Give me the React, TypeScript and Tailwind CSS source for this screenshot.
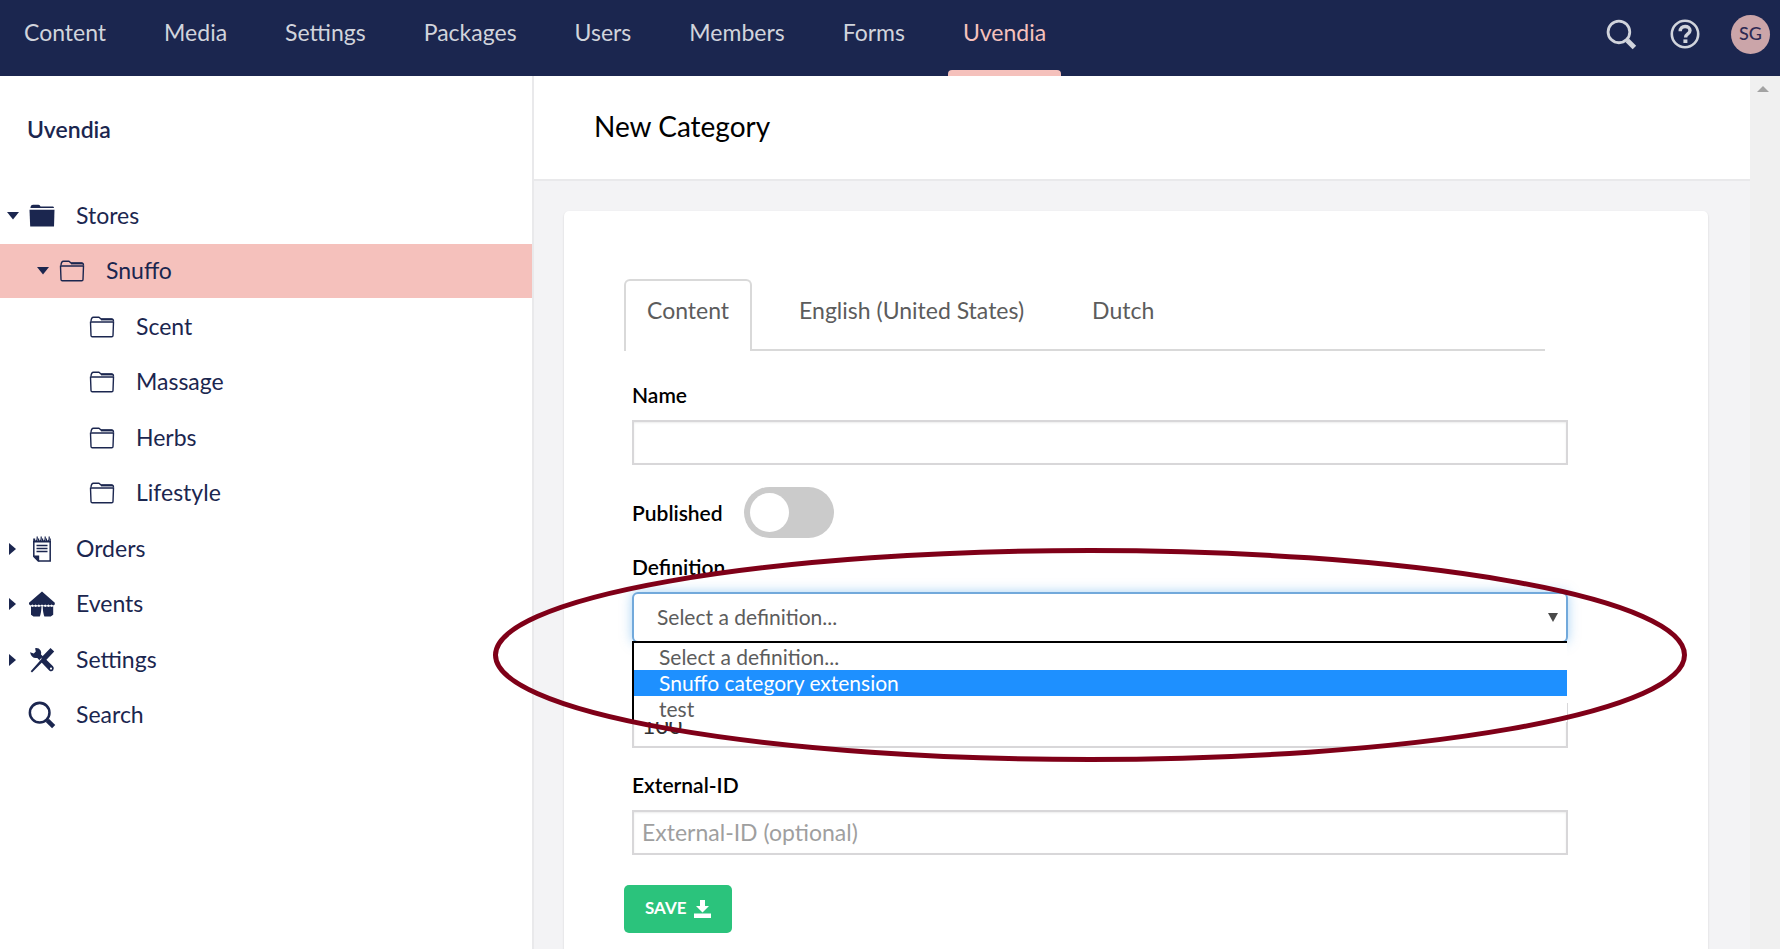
import type { ReactNode } from "react";

const sections = ["Content", "Media", "Settings", "Packages", "Users", "Members", "Forms", "Uvendia"];

function SearchIcon({ className }: { className: string }) {
  return (
    <svg viewBox="0 0 30 30" className={className} fill="none" aria-hidden="true">
      <circle cx="12.500" cy="12.500" r="10.500" stroke="currentColor" strokeWidth="2.700" />
      <path d="M19.500 19.500l1.500 1.500" stroke="currentColor" strokeWidth="3" />
      <path d="M20.700 20.700l6.800 6.800" stroke="currentColor" strokeWidth="4.800" />
    </svg>
  );
}

function HelpIcon() {
  return (
    <svg viewBox="0 0 30 30" className="size-[30px]" fill="none" stroke="currentColor" aria-hidden="true">
      <circle cx="15" cy="15" r="13.200" strokeWidth="2.600" />
      <path d="M10.200 12.200c0-3 2-4.700 4.900-4.700 2.800 0 4.900 1.500 4.900 4.100 0 3.400-4.400 3.300-4.400 6.800" strokeWidth="3.400" />
      <path d="M13.400 22.200h4" strokeWidth="3.600" />
    </svg>
  );
}

function FolderSolid() {
  return (
    <svg viewBox="0 0 26 24" className="h-6 w-[26px]" fill="currentColor" aria-hidden="true">
      <path d="M1.500 4V3Q2 .8 4 .8h5.500q1.500 0 2 1.700H24q1 0 1 1.500z" />
      <path d="M.5 5.800h25L25 22.500H1.200z" />
    </svg>
  );
}

function FolderOutline() {
  return (
    <svg viewBox="0 0 26 24" className="h-6 w-[26px]" fill="none" stroke="currentColor" strokeWidth="1.400" strokeLinejoin="round" aria-hidden="true">
      <path d="M1.500 7L2 20.500q.1 1.300 1.300 1.300h19.400q1.300 0 1.300-1.300L24.500 7z" />
      <path d="M2 6.500Q2.200 2.200 4.500 2.200H10l2 1.800h10.500q2 0 2 2.500" />
      <path d="M12 4.500h11.500" strokeWidth="1.800" />
    </svg>
  );
}

function OrdersIcon() {
  return (
    <svg viewBox="0 0 26 26" className="size-[26px]" fill="none" stroke="currentColor" aria-hidden="true">
      <path d="M4.800 5v15.500l4.500 4.500h11.900V5" strokeWidth="1.500" />
      <path d="M4.200 2.500h17.600v4H4.200z" fill="currentColor" stroke="none" />
      <path d="M7.500 1v3.500M11.500 1v3.500M15.500 1v3.500M19.300 1v3.500" stroke="#fff" strokeWidth="2.600" />
      <path d="M6.500 5q2 0 1.700-4.500M10.500 5q2 0 1.700-4.500M14.500 5q2 0 1.700-4.500M18.500 5q2 0 1.700-4.500" strokeWidth="1.200" />
      <path d="M7.500 9.500h11M7.500 12.500h11M7.500 15.500h11" strokeWidth="1.500" />
      <path d="M4.200 19.500h6V26z" fill="currentColor" stroke="none" />
    </svg>
  );
}

function EventsIcon() {
  return (
    <svg viewBox="0 0 26 26" className="size-[26px]" fill="currentColor" aria-hidden="true">
      <path d="M13 .5L25.800 11.800v1.700l-1.600 1-1.600-1-1.600 1-1.600-1-1.600 1-1.600-1-1.600 1-1.600-1-1.600 1-1.600-1-1.600 1-1.600-1-1.600 1-1.600-1-1.600 1-1.600-1-.4-1.700z" />
      <path d="M2 15.300l1.500.7 1.600-.7 1.600.7 1.600-.7 1.600.7 1.600-.7h1Q12.300 22 10.800 25.500H4.500L2 23.800z" />
      <path d="M24.200 15.300l-1.500.7-1.600-.7-1.600.7-1.600-.7-1.600.7-1.600-.7h-1Q13.900 22 15.400 25.500h6.300l2.500-1.700z" />
    </svg>
  );
}

function ToolsIcon() {
  return (
    <svg viewBox="0 0 26 26" className="size-[26px]" fill="currentColor" aria-hidden="true">
      <path d="M1 5.300l3.800 1.200 2-2-.7-3.300Q9.800.6 11.600 3.500q1 1.800.4 4L24 19.300q1.800 2 .2 4-2 1.900-4 .1L8.300 10.900Q2.600 12 1 5.300zm21 15.200a1.100 1.100 0 100 2.200 1.100 1.100 0 000-2.200z" />
      <path d="M10.800 13.700l3.300-3.300" stroke="#fff" strokeWidth="1.600" />
      <path d="M21.500 1l3.700 3.500-8.700 9.200-1.600-.2L3 25.600 1.700 24.300 12.500 12l-.2-1.600z" />
    </svg>
  );
}

function Caret({ open }: { open: boolean }) {
  return (
    <svg viewBox="0 0 12 12" className="size-3" fill="#1b264f" aria-hidden="true">
      {open ? <path d="M0 2h12L6 9.500z" /> : <path d="M2 0v12L9 6z" />}
    </svg>
  );
}

type Node = { label: string; indent: string; caret?: "open" | "closed"; icon: ReactNode; active?: boolean };

const tree: Node[] = [
  { label: "Stores", indent: "pl-[7px]", caret: "open", icon: <FolderSolid /> },
  { label: "Snuffo", indent: "pl-[37px]", caret: "open", icon: <FolderOutline />, active: true },
  { label: "Scent", indent: "pl-[67px]", icon: <FolderOutline /> },
  { label: "Massage", indent: "pl-[67px]", icon: <FolderOutline /> },
  { label: "Herbs", indent: "pl-[67px]", icon: <FolderOutline /> },
  { label: "Lifestyle", indent: "pl-[67px]", icon: <FolderOutline /> },
  { label: "Orders", indent: "pl-[7px]", caret: "closed", icon: <OrdersIcon /> },
  { label: "Events", indent: "pl-[7px]", caret: "closed", icon: <EventsIcon /> },
  { label: "Settings", indent: "pl-[7px]", caret: "closed", icon: <ToolsIcon /> },
  { label: "Search", indent: "pl-[7px]", icon: <SearchIcon className="size-[28px]" /> },
];

function Header() {
  return (
    <header className="flex h-[76px] shrink-0 items-stretch justify-between bg-[#1b264f] pr-[10px] pl-[9px]">
      <nav className="flex gap-7" aria-label="Sections">
        {sections.map((name) => {
          const active = name === "Uvendia";
          return (
            <a
              key={name}
              href="#"
              className={`relative flex px-[15px] pt-[17px] leading-[30px] ${active ? "text-[#f5c1bc]" : "text-[#d1d4dc]"}`}
            >
              {name}
              {active && <span className="absolute inset-x-0 bottom-0 h-[6px] rounded-t-[4px] bg-[#f5c1bc]" />}
            </a>
          );
        })}
      </nav>
      <div className="flex h-[68px] items-center text-[#d1d4dc]">
        <button type="button" aria-label="Search" className="mr-[33px]">
          <SearchIcon className="size-[31px]" />
        </button>
        <button type="button" aria-label="Help" className="mr-[31px]">
          <HelpIcon />
        </button>
        <button
          type="button"
          className="flex size-[39px] items-center justify-center rounded-full bg-[#cba5a9] pb-[2px] text-[18px] font-medium text-[#2d2a54]"
        >
          SG
        </button>
      </div>
    </header>
  );
}

function Sidebar() {
  return (
    <aside className="w-[534px] shrink-0 border-r-2 border-[#e9e9eb] bg-white text-[#1b264f]">
      <h2 className="px-[27px] pt-[38px] leading-[30px] font-semibold">Uvendia</h2>
      <ul className="mt-11 grid h-[555px] auto-rows-fr items-center">
        {tree.map((n) => (
          <li key={n.label} className={`flex h-[54px] items-center ${n.indent} ${n.active ? "bg-[#f5c1bc]" : ""}`}>
            <span className="w-[21px]">{n.caret && <Caret open={n.caret === "open"} />}</span>
            <span className="flex w-[28px] justify-center">{n.icon}</span>
            <a href="#" className="pb-[2px] pl-5">
              {n.label}
            </a>
          </li>
        ))}
      </ul>
    </aside>
  );
}

function Tabs() {
  const tab = "flex items-start border-2 border-b-0 px-[21px] pt-[14px] leading-[30px]";
  return (
    <div role="tablist" className="mr-[103px] flex h-[72px] text-[#5c5c5c]">
      <button type="button" role="tab" aria-selected="true" className={`${tab} rounded-t-[6px] border-[#d9d9d9]`}>
        Content
      </button>
      <div className="flex flex-1 gap-[22px] border-b-2 border-[#d9d9d9] pl-6">
        <button type="button" role="tab" aria-selected="false" className={`${tab} border-transparent`}>
          English (United States)
        </button>
        <button type="button" role="tab" aria-selected="false" className={`${tab} border-transparent`}>
          Dutch
        </button>
      </div>
    </div>
  );
}

const label = "block text-[21px] leading-[26px] font-semibold text-black";
const field =
  "block h-[45px] w-full border-2 border-[#d8d7d9] bg-white px-2 pb-[2px] text-[#303033] shadow-[inset_0_1px_2px_rgba(0,0,0,0.08)] outline-none placeholder:text-[#9f9f9f]";

function Definition() {
  return (
    <div className="relative text-[21px]">
      <select
        id="definition"
        className="block h-[51px] w-full appearance-none rounded-[6px] border-2 border-[#72a9db] bg-white pr-10 pb-[2px] pl-[23px] text-[#5c5c5c] shadow-[0_0_12px_rgba(82,168,236,0.5)] outline-none"
      >
        <option>Select a definition...</option>
      </select>
      <svg viewBox="0 0 10 10" className="pointer-events-none absolute top-[20px] right-[10px] size-[10px]" fill="#4a4a4a" aria-hidden="true">
        <path d="M0 1h10L5 10z" />
      </svg>
      <ul className="absolute top-[49px] right-px left-0 border-t-2 border-l-2 border-black bg-white pt-px text-[#5c5c5c]">
        <li className="pl-[25px] leading-[26px]">Select a definition...</li>
        <li className="bg-[#1e90ff] pl-[25px] leading-[26px] text-white">Snuffo category extension</li>
        <li className="pl-[25px] leading-[26px]">test</li>
      </ul>
    </div>
  );
}

function CategoryForm() {
  return (
    <form className="flex-1 rounded-t-[5px] bg-white px-[60px] pt-[68px] shadow-[0_1px_2px_rgba(0,0,0,0.16)]">
      <Tabs />
      <div className="mr-[80px] pt-[31px] pl-2">
        <label htmlFor="name" className={label}>
          Name
        </label>
        <input id="name" className={`${field} mt-3`} />
        <div className="mt-[22px] flex items-center gap-[21px]">
          <label htmlFor="published" className={label}>
            Published
          </label>
          <input
            id="published"
            type="checkbox"
            role="switch"
            className="h-[51px] w-[90px] appearance-none rounded-full bg-[#cbcbcb] p-[6px] before:block before:size-[39px] before:rounded-full before:bg-white"
          />
        </div>
        <label htmlFor="definition" className={`${label} mt-[16px] mb-3`}>
          Definition
        </label>
        <Definition />
        <input aria-label="Sort order" defaultValue="100" className={`${field} mt-[60px]`} />
        <label htmlFor="external" className={`${label} mt-6`}>
          External-ID
        </label>
        <input id="external" placeholder="External-ID (optional)" className={`${field} mt-3`} />
      </div>
      <button
        type="button"
        className="mt-[30px] flex h-[48px] items-center gap-[7px] rounded-[5px] bg-[#2bc37c] px-[21px] text-[17px] font-bold text-white"
      >
        <span className="pb-[2px]">SAVE</span>
        <svg viewBox="0 0 17 18" className="h-[18px] w-[17px]" fill="currentColor" aria-hidden="true">
          <path d="M6 0h5v6h4l-6.500 6.500L2 6h4zM0 13.500h17V18H0z" />
        </svg>
      </button>
    </form>
  );
}

export default function App() {
  return (
    <div className="relative flex min-h-screen flex-col overflow-hidden font-['Lato',sans-serif] text-[23px]">
      <Header />
      <div className="flex flex-1">
        <Sidebar />
        <main className="flex min-w-0 flex-1 flex-col bg-[#f3f3f5]">
          <h1 className="h-[105px] shrink-0 border-b-2 border-[#e9e9eb] bg-white pt-8 pl-[60px] text-[28px] leading-[36px] text-black">
            New Category
          </h1>
          <div className="flex flex-1 pt-[30px] pr-[42px] pl-[30px]">
            <CategoryForm />
          </div>
        </main>
        <div className="w-[30px] shrink-0 bg-[#f0f0f0] pt-[10px] pl-[7px]">
          <svg viewBox="0 0 12 6" className="h-[6px] w-3" fill="#a3a3a3" aria-hidden="true">
            <path d="M6 0l6 6H0z" />
          </svg>
        </div>
      </div>
      <svg
        viewBox="0 0 1196 216"
        className="pointer-events-none absolute top-[547px] left-[492px] h-[216px] w-[1196px]"
        fill="none"
        aria-hidden="true"
      >
        <ellipse cx="598" cy="108" rx="594.500" ry="104.500" stroke="#7f0018" strokeWidth="5" />
      </svg>
    </div>
  );
}
